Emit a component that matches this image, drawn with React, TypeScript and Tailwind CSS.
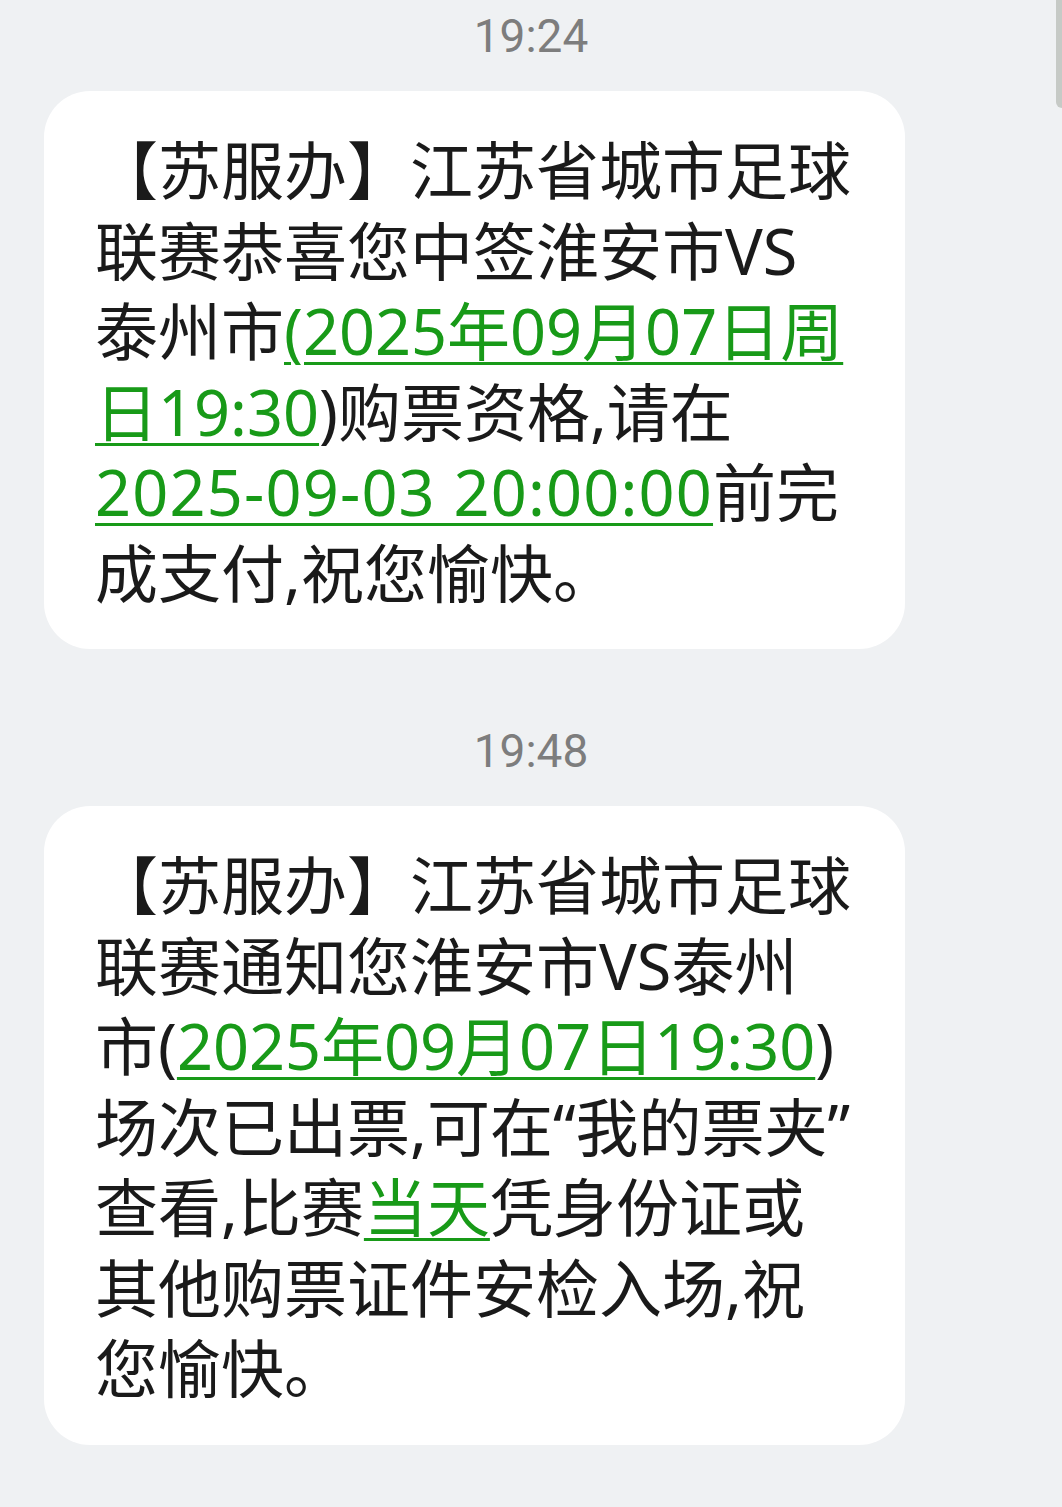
const textFont = {
  fontFamily: '"Noto Sans", "Noto Sans CJK SC", sans-serif',
}

function Link({
  children,
  wide = false,
}: {
  children: React.ReactNode
  wide?: boolean
}) {
  return (
    <span
      className={
        wide
          ? 'text-[#189a18] underline decoration-[3px] underline-offset-[7px] tracking-[1.2px]'
          : 'text-[#189a18] underline decoration-[3px] underline-offset-[7px]'
      }
    >
      {children}
    </span>
  )
}

function Time({ children }: { children: React.ReactNode }) {
  return (
    <div
      className="h-[54px] text-center text-[46px] leading-[54px] text-[#7d7d7d]"
      style={{ fontFamily: 'Roboto, sans-serif' }}
    >
      {children}
    </div>
  )
}

function Bubble({ children }: { children: React.ReactNode }) {
  return (
    <div
      className="mt-[28px] w-[861px] rounded-[46px] bg-white pl-[51px] pr-[40px] pt-[39px] pb-[36px] text-[63px] leading-[80.5px] text-[#1a1a1a] whitespace-nowrap"
      style={textFont}
    >
      {children}
    </div>
  )
}

export default function App() {
  return (
    <div className="relative min-h-screen bg-[#eff1f3] px-[44px] pt-[9px]">
      {/* scroll thumb */}
      <div className="absolute right-0 top-0 h-[108px] w-[6px] rounded-bl-[6px] bg-[#c6cac6]"></div>

      <Time>19:24</Time>
      <Bubble>
        【苏服办】江苏省城市足球
        <br />
        联赛恭喜您中签淮安市VS
        <br />
        泰州市
        <Link>
          (2025年09月07日周
          <br />
          日19:30
        </Link>
        )购票资格,请在
        <br />
        <Link wide>2025-09-03 20:00:00</Link>前完
        <br />
        成支付,祝您愉快。
      </Bubble>

      <div className="mt-[75px]">
        <Time>19:48</Time>
      </div>
      <Bubble>
        【苏服办】江苏省城市足球
        <br />
        联赛通知您淮安市VS泰州
        <br />
        市(<Link>2025年09月07日19:30</Link>)
        <br />
        场次已出票,可在“我的票夹”
        <br />
        查看,比赛<Link>当天</Link>凭身份证或
        <br />
        其他购票证件安检入场,祝
        <br />
        您愉快。
      </Bubble>
    </div>
  )
}
